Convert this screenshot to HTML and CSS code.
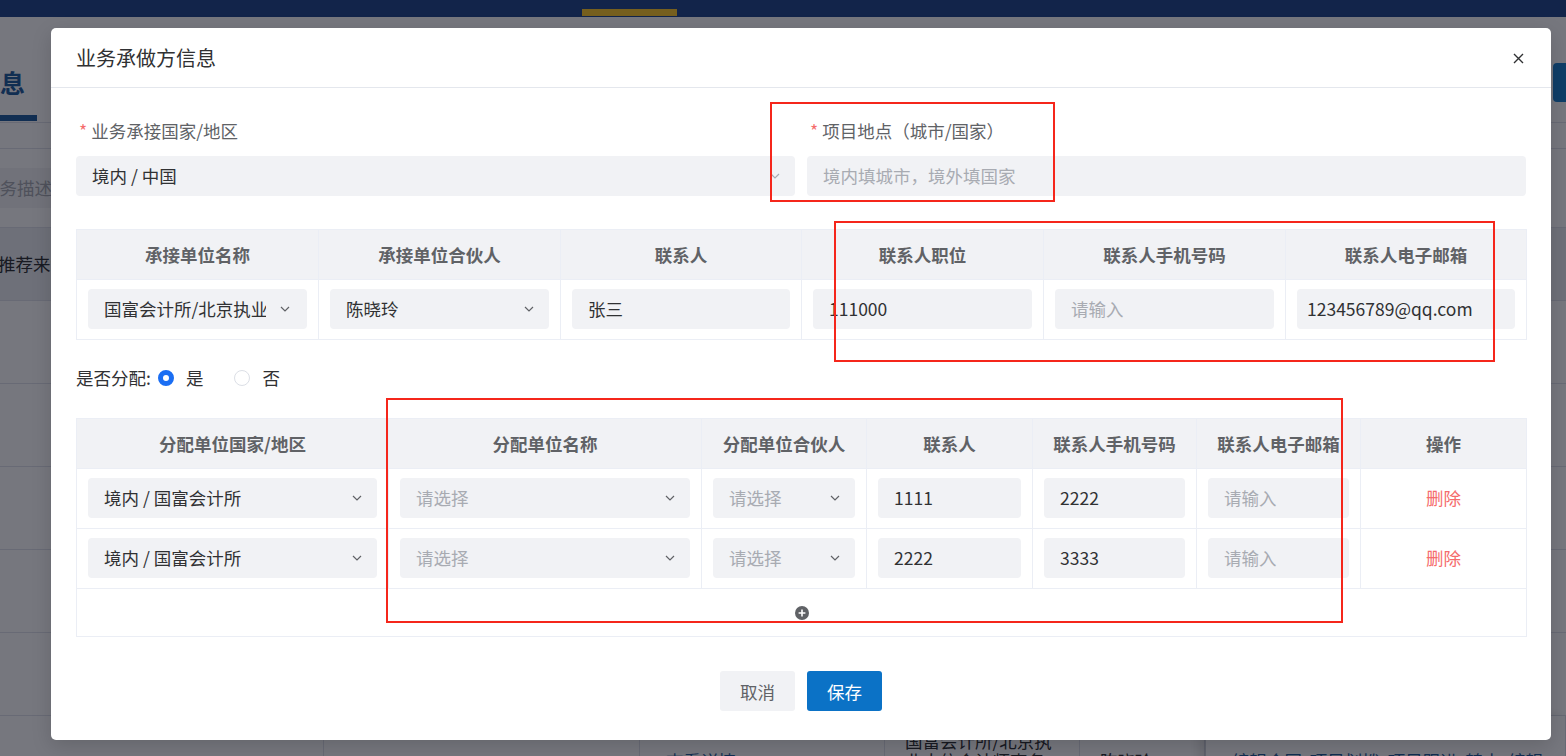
FILE: index.html
```html
<!DOCTYPE html>
<html lang="zh-CN">
<head>
    <meta charset="UTF-8">
    <meta name="viewport" content="width=device-width, initial-scale=1.0">
    <title>业务承做方信息</title>
    <link rel="stylesheet" href="styles.css">
</head>
<body>
    <!-- pagina de fundo (fica atras da mascara) -->
    <div class="bg">
        <div class="bg-nav"><span class="bg-nav-tab"></span></div>
        <div class="bg-head">
            <div class="bg-tab"><span>基本信息</span></div>
            <div class="bg-head-btn"></div>
        </div>
        <div class="bg-sub"></div>
        <div class="bg-field"><div class="bg-field-box"><span>业务描述</span></div></div>
        <div class="bg-row bg-row-dark"><span class="bg-cut">推荐来源</span></div>
        <div class="bg-row"></div>
        <div class="bg-row"></div>
        <div class="bg-row"></div>
        <div class="bg-row"></div>
        <div class="bg-row"></div>
        <div class="bg-row bg-table-row">
            <div class="bg-cell"></div>
            <div class="bg-cell"></div>
            <div class="bg-cell bg-link">查看详情</div>
            <div class="bg-cell">国富会计所/北京执业大信会计师事务所</div>
            <div class="bg-cell">陈晓玲</div>
            <div class="bg-cell bg-fixed bg-link">编辑合同&nbsp;&nbsp;项目划拨&nbsp;&nbsp;项目跟进&nbsp;&nbsp;转中&nbsp;&nbsp;编辑</div>
        </div>
    </div>

    <div class="mask"></div>

    <div class="dialog">
        <div class="dialog-header">
            <span class="dialog-title">业务承做方信息</span>
            <span class="dialog-close">
                <svg width="11" height="11" viewBox="0 0 11 11"><path d="M1 1 L10 10 M10 1 L1 10" stroke="#303133" stroke-width="1.4" fill="none"/></svg>
            </span>
        </div>

        <div class="dialog-body">
            <div class="form-row">
                <div class="form-item">
                    <label class="form-label"><i class="req">*</i>业务承接国家/地区</label>
                    <div class="field">
                        <span class="field-text">境内 / 中国</span>
                        <svg class="arrow arrow-light" viewBox="0 0 10 6"><polyline points="1,1 5,5 9,1"/></svg>
                    </div>
                </div>
                <div class="form-item">
                    <label class="form-label"><i class="req">*</i>项目地点（城市/国家）</label>
                    <div class="field">
                        <span class="field-text placeholder">境内填城市，境外填国家</span>
                    </div>
                </div>
            </div>

            <table class="grid">
                <colgroup>
                    <col style="width:242px"><col style="width:242px"><col style="width:241px">
                    <col style="width:242px"><col style="width:242px"><col style="width:241px">
                </colgroup>
                <thead>
                    <tr>
                        <th>承接单位名称</th>
                        <th>承接单位合伙人</th>
                        <th>联系人</th>
                        <th>联系人职位</th>
                        <th>联系人手机号码</th>
                        <th>联系人电子邮箱</th>
                    </tr>
                </thead>
                <tbody>
                    <tr>
                        <td><div class="field field-clip"><span class="field-text">国富会计所/北京执业有限公司</span><svg class="arrow" viewBox="0 0 10 6"><polyline points="1,1 5,5 9,1"/></svg></div></td>
                        <td><div class="field"><span class="field-text">陈晓玲</span><svg class="arrow" viewBox="0 0 10 6"><polyline points="1,1 5,5 9,1"/></svg></div></td>
                        <td><div class="field"><span class="field-text">张三</span></div></td>
                        <td><div class="field"><span class="field-text">111000</span></div></td>
                        <td><div class="field"><span class="field-text placeholder">请输入</span></div></td>
                        <td><div class="field field-tight"><span class="field-text">123456789@qq.com</span></div></td>
                    </tr>
                </tbody>
            </table>

            <div class="radio-row">
                <span class="radio-label">是否分配:</span>
                <span class="radio checked"><span class="radio-dot"></span>是</span>
                <span class="radio"><span class="radio-dot"></span>否</span>
            </div>

            <table class="grid">
                <colgroup>
                    <col style="width:312px"><col style="width:313px"><col style="width:165px">
                    <col style="width:166px"><col style="width:164px"><col style="width:164px">
                    <col style="width:166px">
                </colgroup>
                <thead>
                    <tr>
                        <th>分配单位国家/地区</th>
                        <th>分配单位名称</th>
                        <th>分配单位合伙人</th>
                        <th>联系人</th>
                        <th>联系人手机号码</th>
                        <th>联系人电子邮箱</th>
                        <th>操作</th>
                    </tr>
                </thead>
                <tbody>
                    <tr>
                        <td><div class="field"><span class="field-text">境内 / 国富会计所</span><svg class="arrow" viewBox="0 0 10 6"><polyline points="1,1 5,5 9,1"/></svg></div></td>
                        <td><div class="field"><span class="field-text placeholder">请选择</span><svg class="arrow" viewBox="0 0 10 6"><polyline points="1,1 5,5 9,1"/></svg></div></td>
                        <td><div class="field"><span class="field-text placeholder">请选择</span><svg class="arrow" viewBox="0 0 10 6"><polyline points="1,1 5,5 9,1"/></svg></div></td>
                        <td><div class="field"><span class="field-text">1111</span></div></td>
                        <td><div class="field"><span class="field-text">2222</span></div></td>
                        <td><div class="field"><span class="field-text placeholder">请输入</span></div></td>
                        <td class="cell-center"><span class="link-danger">删除</span></td>
                    </tr>
                    <tr>
                        <td><div class="field"><span class="field-text">境内 / 国富会计所</span><svg class="arrow" viewBox="0 0 10 6"><polyline points="1,1 5,5 9,1"/></svg></div></td>
                        <td><div class="field"><span class="field-text placeholder">请选择</span><svg class="arrow" viewBox="0 0 10 6"><polyline points="1,1 5,5 9,1"/></svg></div></td>
                        <td><div class="field"><span class="field-text placeholder">请选择</span><svg class="arrow" viewBox="0 0 10 6"><polyline points="1,1 5,5 9,1"/></svg></div></td>
                        <td><div class="field"><span class="field-text">2222</span></div></td>
                        <td><div class="field"><span class="field-text">3333</span></div></td>
                        <td><div class="field"><span class="field-text placeholder">请输入</span></div></td>
                        <td class="cell-center"><span class="link-danger">删除</span></td>
                    </tr>
                    <tr>
                        <td colspan="7" class="add-cell">
                            <div class="add-row">
                                <svg width="14" height="14" viewBox="0 0 14 14"><circle cx="7" cy="7" r="7" fill="#606266"/><path d="M7 3.6 V10.4 M3.6 7 H10.4" stroke="#fff" stroke-width="1.6"/></svg>
                            </div>
                        </td>
                    </tr>
                </tbody>
            </table>
        </div>

        <div class="dialog-footer">
            <button class="btn">取消</button>
            <button class="btn btn-primary">保存</button>
        </div>
    </div>

    <!-- marcacoes vermelhas da captura -->
    <div class="mark mark-1"></div>
    <div class="mark mark-2"></div>
    <div class="mark mark-3"></div>
</body>
</html>
```

FILE: styles.css
```css
html, body {
    margin: 0;
    padding: 0;
}
body {
    width: 1566px;
    height: 756px;
    overflow: hidden;
    position: relative;
    font-family: "Noto Sans CJK SC", "Liberation Sans", sans-serif;
    font-size: 17.5px;
    color: #303133;
    background-color: #fff;
}

/* ---------- fundo ---------- */
.bg {
    width: 1566px;
    height: 756px;
    overflow: hidden;
}
.bg-nav {
    height: 17px;
    background-color: #22488c;
    position: relative;
}
.bg-nav-tab {
    display: block;
    margin-left: 582px;
    padding-top: 9px;
    width: 95px;
    height: 7px;
    background-clip: content-box;
    background-color: #fecb2a;
}
.bg-head {
    height: 106px;
    box-sizing: border-box;
    display: flex;
    justify-content: space-between;
    border-bottom: 1px solid #dfe3ea;
}
.bg-tab {
    width: 37px;
    align-self: flex-end;
    display: flex;
    justify-content: flex-end;
    box-sizing: border-box;
    padding-right: 12px;
    padding-bottom: 20px;
    border-bottom: 6px solid #1f5e9e;
    margin-bottom: 1px;
    font-size: 25px;
    font-weight: bold;
    line-height: 26px;
    color: #1f5e9e;
    white-space: nowrap;
}
.bg-head-btn {
    align-self: flex-start;
    margin-top: 46px;
    margin-right: -60px;
    width: 73px;
    height: 39px;
    border-radius: 4px;
    background-color: #1b80cf;
}
.bg-sub {
    height: 25px;
    border-bottom: 1px solid #dfe3ea;
}
.bg-field {
    height: 79px;
    box-sizing: border-box;
    padding-top: 19px;
    border-bottom: 1px solid #dfe3ea;
}
.bg-field-box {
    width: 700px;
    height: 40px;
    background-color: #f3f4f6;
    line-height: 40px;
    color: #a8abb2;
    overflow: hidden;
    white-space: nowrap;
}
.bg-field-box span {
    margin-left: -18px;
}
.bg-row {
    height: 83px;
    box-sizing: border-box;
    border-bottom: 1px solid #dfe3ea;
}
.bg-row-dark {
    height: 73px;
    background-color: #eef0f4;
    line-height: 72px;
    white-space: nowrap;
}
.bg-cut {
    margin-left: -2px;
}
.bg-table-row {
    display: grid;
    grid-template-columns: 324px 316px 245px 195px 125px 361px;
    height: 90px;
}
.bg-cell {
    border-right: 1px solid #dfe3ea;
    padding: 0 20px;
    display: flex;
    align-items: center;
    line-height: 20px;
    font-size: 17.5px;
    color: #303133;
    overflow: hidden;
}
.bg-link {
    color: #1f5e9e;
    padding-left: 26px;
}
.bg-fixed {
    border-left: 1px solid #cfd3da;
    box-shadow: -6px 0 10px rgba(0,0,0,0.12);
    white-space: nowrap;
}

.mask {
    position: absolute;
    left: 0;
    top: 0;
    width: 100%;
    height: 100%;
    background-color: rgba(5, 8, 20, 0.55);
}

/* ---------- dialogo ---------- */
.dialog {
    position: absolute;
    left: 51px;
    top: 28px;
    width: 1500px;
    background-color: #fff;
    border-radius: 5px;
    box-shadow: 0 6px 20px rgba(0,0,0,0.15);
}
.dialog-header {
    height: 59px;
    border-bottom: 1px solid #e4e7ed;
    display: flex;
    align-items: center;
    justify-content: space-between;
    padding: 0 27px 0 25px;
}
.dialog-title {
    font-size: 20px;
    line-height: 24px;
    color: #303133;
}
.dialog-close {
    display: flex;
    width: 11px;
    height: 11px;
    margin-top: 1px;
}
.dialog-body {
    padding: 32px 25px 0 25px;
}

.form-row {
    display: flex;
    gap: 12px;
}
.form-item {
    flex: 1;
}
.form-label {
    display: block;
    padding-left: 3px;
    line-height: 22px;
    margin-bottom: 14px;
    color: #606266;
}
.req {
    font-style: normal;
    color: #f56c6c;
    margin-right: 4px;
}

.field {
    height: 40px;
    box-sizing: border-box;
    background-color: #f1f2f5;
    border-radius: 4px;
    padding: 0 16px;
    display: flex;
    align-items: center;
    gap: 8px;
}
.field-tight {
    padding: 0 10px;
}
.field-clip {
    gap: 14px;
    padding-right: 18px;
}
.field-text {
    flex: 1;
    min-width: 0;
    white-space: nowrap;
    overflow: hidden;
    line-height: 38px;
    color: #303133;
}
.placeholder {
    color: #a8abb2;
}
.arrow {
    width: 10px;
    height: 6px;
    flex: none;
    fill: none;
    stroke: #606266;
    stroke-width: 1.2;
    margin-right: -1px;
}
.arrow-light {
    stroke: #a8abb2;
}

/* tabelas */
.grid {
    width: 1450px;
    table-layout: fixed;
    border-collapse: collapse;
    border: 1px solid #ebeef5;
    margin-top: 33px;
}
.grid th {
    height: 49px;
    padding: 0;
    background-color: #f1f2f5;
    color: #606266;
    font-weight: bold;
    text-align: center;
    border: 1px solid #ebeef5;
    line-height: 22px;
    white-space: nowrap;
}
.grid td {
    padding: 9px 11px 10px 11px;
    border: 1px solid #ebeef5;
}
.cell-center {
    text-align: center;
    line-height: 22px;
}
.link-danger {
    color: #f56c6c;
}
.add-cell.add-cell {
    padding: 0;
}
.add-row {
    height: 47px;
    display: flex;
    align-items: center;
    justify-content: center;
}

.radio-row {
    display: flex;
    align-items: center;
    line-height: 24px;
    margin-top: 26px;
}
.radio-row + .grid {
    margin-top: 28px;
}
.radio-label {
    margin-right: 7px;
}
.radio {
    display: flex;
    align-items: center;
    gap: 12px;
    margin-right: 31px;
}
.radio-dot {
    width: 16px;
    height: 16px;
    box-sizing: border-box;
    border-radius: 50%;
    border: 1px solid #dcdfe6;
    background-color: #fff;
}
.radio.checked .radio-dot {
    border: 5px solid #1b6ef3;
}

.dialog-footer {
    display: flex;
    justify-content: center;
    gap: 12px;
    padding: 34px 0 29px 0;
}
.btn {
    width: 75px;
    height: 40px;
    border: none;
    border-radius: 3px;
    background-color: #f1f2f5;
    color: #606266;
    font-family: inherit;
    font-size: 17.5px;
    cursor: pointer;
}
.btn-primary {
    background-color: #0b72c6;
    color: #fff;
}

/* marcacoes */
.mark {
    position: absolute;
    border: 2px solid #f5261b;
    box-sizing: border-box;
}
.mark-1 {
    left: 770px;
    top: 102px;
    width: 285px;
    height: 100px;
}
.mark-2 {
    left: 834px;
    top: 221px;
    width: 661px;
    height: 141px;
}
.mark-3 {
    left: 386px;
    top: 398px;
    width: 957px;
    height: 225px;
}
```
